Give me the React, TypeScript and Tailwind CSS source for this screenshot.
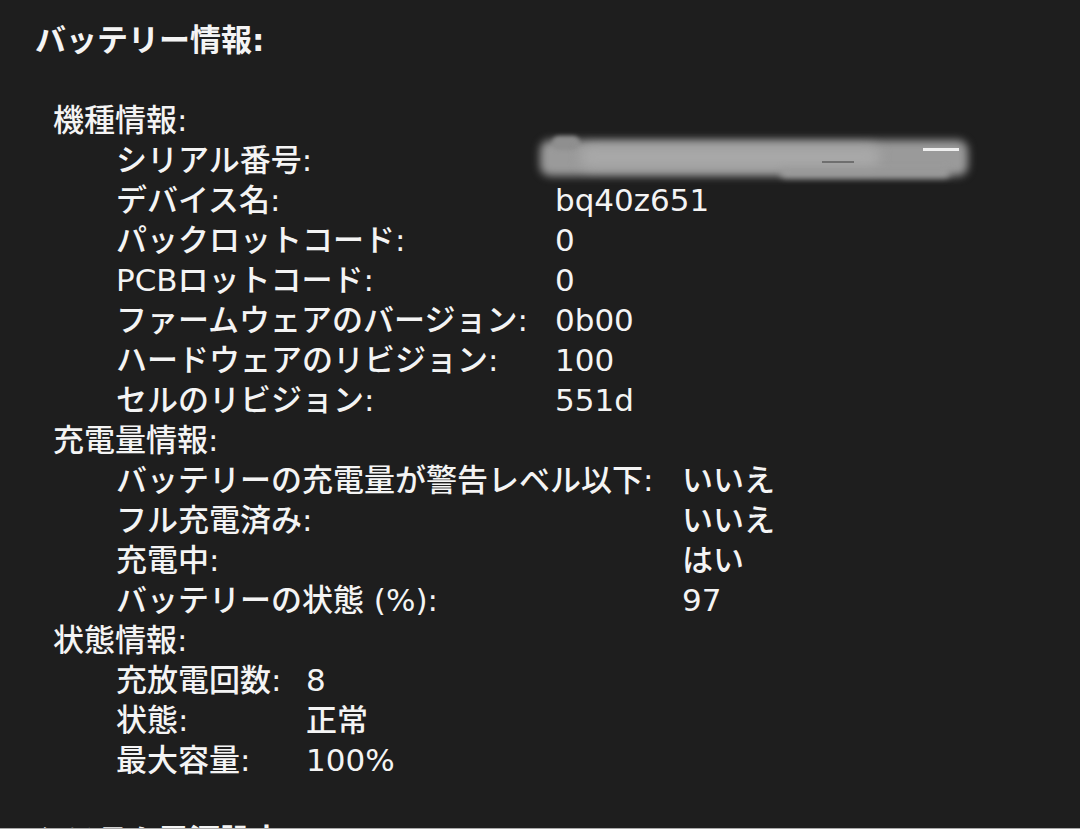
import React from "react";

type Row = { label: string; value?: string; blur?: boolean };

const FONT = {
  fontFamily: '"DejaVu Sans", "Noto Sans CJK JP", sans-serif',
};

function Section({
  title,
  rows,
  labelWidth,
}: {
  title: string;
  rows: Row[];
  labelWidth: string;
}) {
  return (
    <div className="flex flex-col">
      <div className="pl-[53px] h-[40px] leading-[40px]">{title}</div>
      {rows.map((r) => (
        <div key={r.label} className="flex pl-[116px] h-[40px] leading-[40px]">
          <div className={`${labelWidth} shrink-0 whitespace-nowrap`}>{r.label}</div>
          <div className="relative whitespace-nowrap">
            {r.blur ? (
              <div className="absolute left-[-15px] top-[-6px] w-[428px] h-[46px]">
                <div className="absolute left-0 top-[6px] w-[428px] h-[36px] rounded-[10px] bg-[#9a9a9a] blur-[4px]" />
                <div className="absolute left-[12px] top-[2px] w-[28px] h-[14px] rounded-full bg-[#8f8f8f] blur-[2px]" />
                <div className="absolute left-[40px] top-[12px] w-[300px] h-[22px] rounded-full bg-[#a8a8a8] blur-[6px]" />
                <div className="absolute left-[240px] top-[34px] w-[170px] h-[10px] rounded-full bg-[#9c9c9c] blur-[3px]" />
                <div className="absolute left-[383px] top-[14px] w-[36px] h-[3px] bg-[#efefef] blur-[0.5px]" />
                <div className="absolute left-[282px] top-[27px] w-[32px] h-[2px] bg-[#6f6f6f] blur-[0.5px]" />
              </div>
            ) : (
              r.value
            )}
          </div>
        </div>
      ))}
    </div>
  );
}

export default function App() {
  return (
    <div
      className="w-[1080px] h-[829px] overflow-hidden bg-[#1e1e1e] text-[#f4f4f4] text-[31px] font-medium border-b border-[#a9a9a9]"
      style={FONT}
    >
      <div className="pt-[20px] flex flex-col">
        <div className="pl-[35px] h-[40px] leading-[40px] font-bold">バッテリー情報:</div>
        <div className="h-[40px]" />
        <Section
          title="機種情報:"
          labelWidth="w-[439px]"
          rows={[
            { label: "シリアル番号:", blur: true },
            { label: "デバイス名:", value: "bq40z651" },
            { label: "パックロットコード:", value: "0" },
            { label: "PCBロットコード:", value: "0" },
            { label: "ファームウェアのバージョン:", value: "0b00" },
            { label: "ハードウェアのリビジョン:", value: "100" },
            { label: "セルのリビジョン:", value: "551d" },
          ]}
        />
        <Section
          title="充電量情報:"
          labelWidth="w-[566px]"
          rows={[
            { label: "バッテリーの充電量が警告レベル以下:", value: "いいえ" },
            { label: "フル充電済み:", value: "いいえ" },
            { label: "充電中:", value: "はい" },
            { label: "バッテリーの状態 (%):", value: "97" },
          ]}
        />
        <Section
          title="状態情報:"
          labelWidth="w-[190px]"
          rows={[
            { label: "充放電回数:", value: "8" },
            { label: "状態:", value: "正常" },
            { label: "最大容量:", value: "100%" },
          ]}
        />
        <div className="h-[40px]" />
        <div className="pl-[35px] h-[40px] leading-[40px] font-bold">システム電源設定:</div>
      </div>
    </div>
  );
}
